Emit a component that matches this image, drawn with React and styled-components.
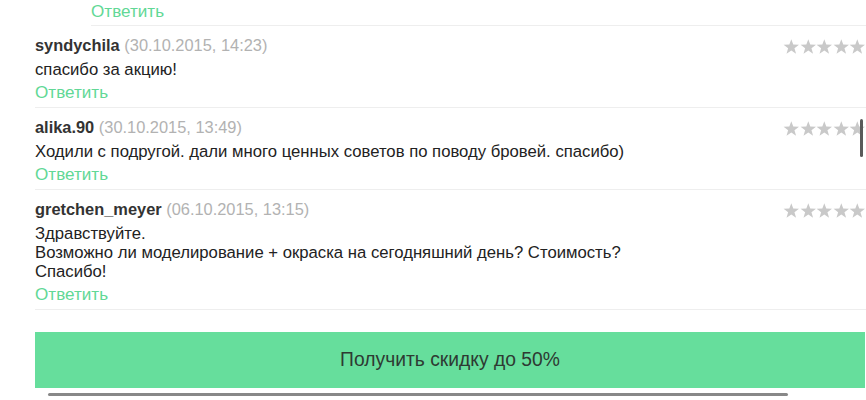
import React from 'react';
import styled, { createGlobalStyle } from 'styled-components';

const green = '#66de9c';

const GlobalStyle = createGlobalStyle`
  html, body {
    margin: 0;
    padding: 0;
    background: #ffffff;
    overflow: hidden;
  }
  body {
    font-family: "Liberation Sans", Arial, sans-serif;
    font-size: 16px;
    color: #222222;
  }
`;

const Page = styled.div`
  position: relative;
  width: 866px;
  height: 400px;
  overflow: hidden;
`;

const Feed = styled.div`
  margin-top: 2px;
  padding-left: 35px;
  width: 831px;
`;

const Comment = styled.div`
  margin-left: ${(props) => props.indent || 0}px;
  padding: ${(props) => (props.cut ? '0' : '10px')} 0 ${(props) => (props.cut ? '4px' : '5px')};
  border-bottom: 1px solid #eeeeee;
`;

const Head = styled.div`
  display: flex;
  align-items: center;
  justify-content: space-between;
  height: 19px;
`;

const Author = styled.span`
  font-size: 16.4px;
  font-weight: bold;
  color: #333333;
  line-height: 19px;
`;

const When = styled.span`
  font-weight: normal;
  color: #b2b2b2;
`;

const Stars = styled.div`
  display: flex;
  margin-top: 2px;
`;

const Body = styled.div`
  margin-top: 5px;
  font-size: 16.7px;
  line-height: 19px;
  color: #222222;
`;

const Reply = styled.a`
  display: block;
  margin-top: ${(props) => (props.cut ? 0 : 4)}px;
  font-size: 17.1px;
  line-height: 19px;
  color: #62d896;
  text-decoration: none;
`;

const Discount = styled.button`
  display: block;
  width: 830px;
  height: 56px;
  margin-top: 22px;
  border: 0;
  padding: 0;
  background: ${green};
  font-family: "Liberation Sans", Arial, sans-serif;
  font-size: 19.3px;
  color: #2e3a33;
  cursor: pointer;
`;

const VScroll = styled.div`
  position: absolute;
  left: 860px;
  top: 119px;
  width: 3px;
  height: 38px;
  border-radius: 2px;
  background: #5a5a5a;
`;

const HScroll = styled.div`
  position: absolute;
  left: 48px;
  top: 393px;
  width: 740px;
  height: 3px;
  border-radius: 2px;
  background: #888888;
`;

const Star = () => (
  <svg width="16.6" height="15.5" viewBox="0 0 24 23">
    <polygon
      points="12,0.5 14.9,8.3 23.4,8.5 16.7,13.7 19.1,21.9 12,17.1 4.9,21.9 7.3,13.7 0.6,8.5 9.1,8.3"
      fill="#c9c9c9"
    />
  </svg>
);

const comments = [
  { author: 'syndychila', date: '30.10.2015, 14:23', text: ['спасибо за акцию!'] },
  {
    author: 'alika.90',
    date: '30.10.2015, 13:49',
    text: ['Ходили с подругой. дали много ценных советов по поводу бровей. спасибо)'],
  },
  {
    author: 'gretchen_meyer',
    date: '06.10.2015, 13:15',
    text: [
      'Здравствуйте.',
      'Возможно ли моделирование + окраска на сегодняшний день? Стоимость?',
      'Спасибо!',
    ],
  },
];

export default function App() {
  return (
    <Page>
      <GlobalStyle />
      <Feed>
        <Comment indent={56} cut>
          <Reply cut>Ответить</Reply>
        </Comment>
        {comments.map((c) => (
          <Comment key={c.author}>
            <Head>
              <Author>
                {c.author} <When>({c.date})</When>
              </Author>
              <Stars>
                {[0, 1, 2, 3, 4].map((i) => (
                  <Star key={i} />
                ))}
              </Stars>
            </Head>
            <Body>
              {c.text.map((line) => (
                <div key={line}>{line}</div>
              ))}
            </Body>
            <Reply>Ответить</Reply>
          </Comment>
        ))}
        <Discount>Получить скидку до 50%</Discount>
      </Feed>
      <VScroll />
      <HScroll />
    </Page>
  );
}
